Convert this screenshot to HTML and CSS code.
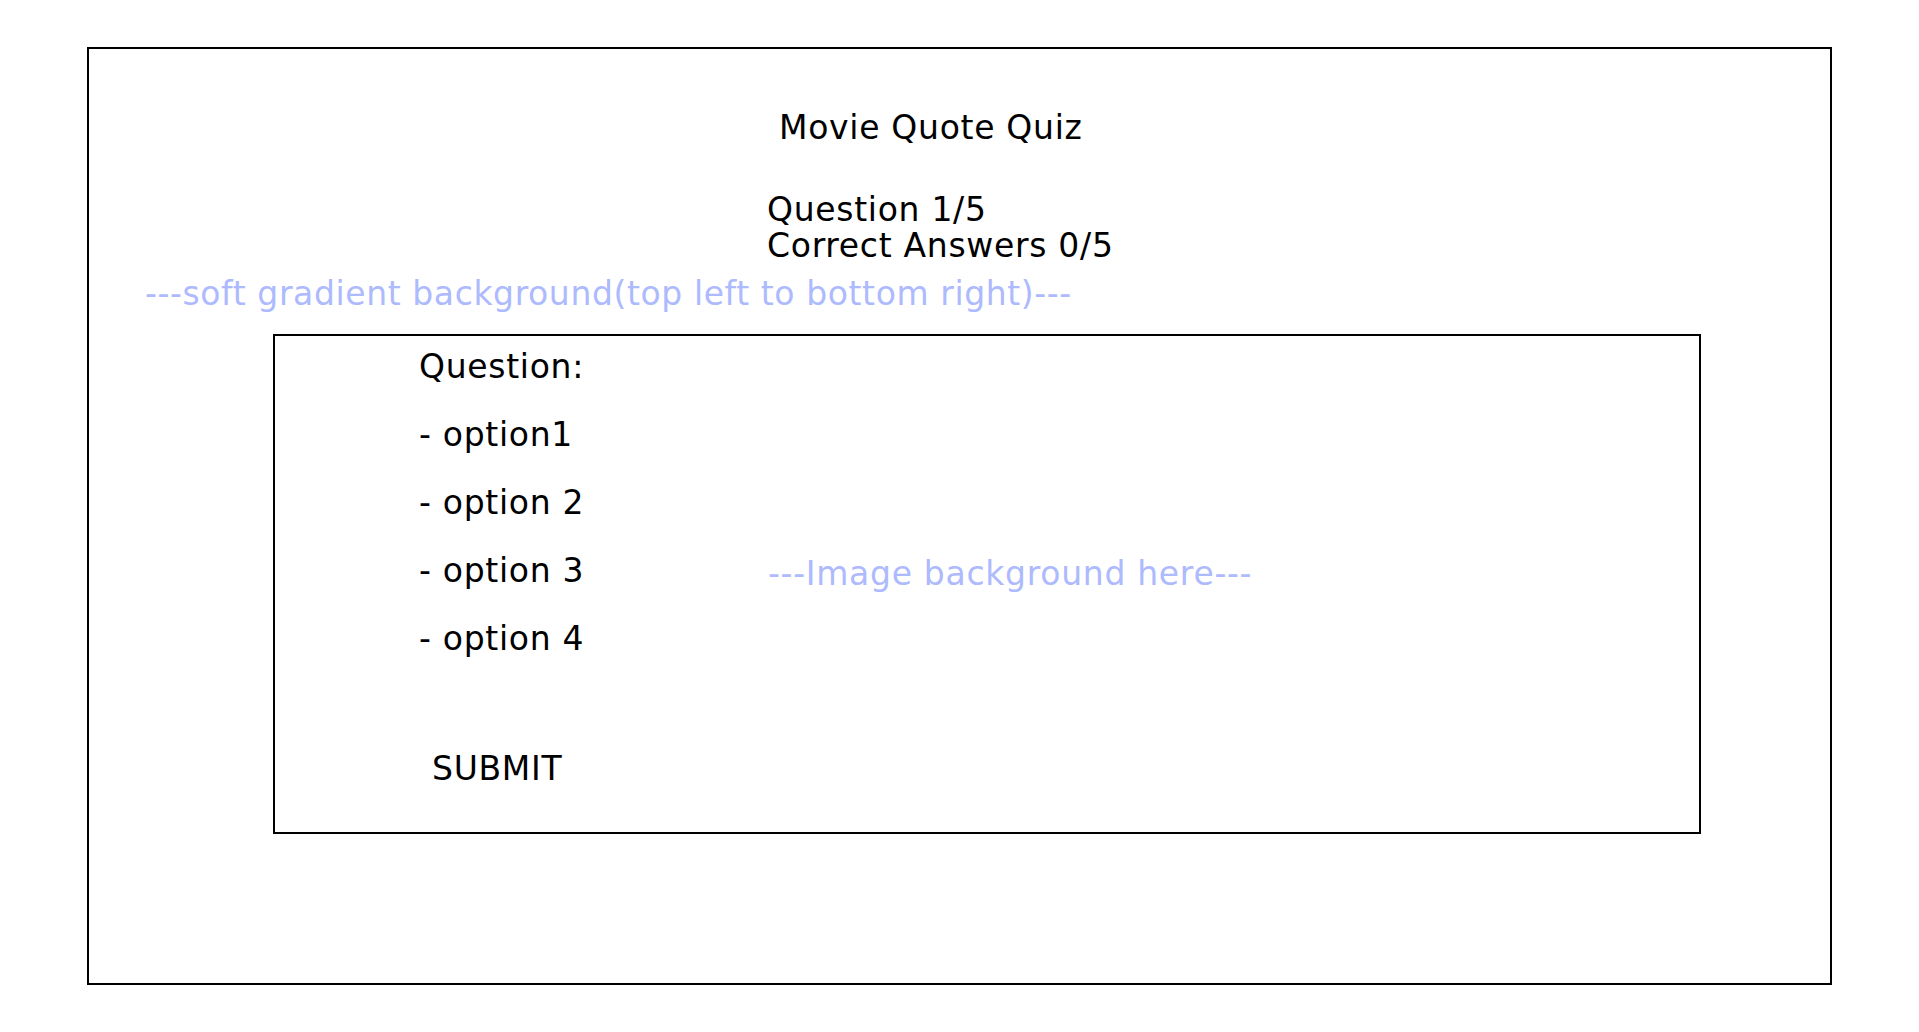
FILE: index.html
```html
<!DOCTYPE html>
<html lang="en">
<head>
<meta charset="utf-8">
<title>Movie Quote Quiz</title>
<link rel="stylesheet" href="styles.css">
</head>
<body>
  <div class="frame">
    <h1 class="title">Movie Quote Quiz</h1>
    <div class="stats">
      <div class="stat">Question 1/5</div>
      <div class="stat">Correct Answers 0/5</div>
    </div>
    <div class="note note-gradient">---soft gradient background(top left to bottom right)---</div>
    <div class="card">
      <div class="quiz">
        <div class="line">Question:</div>
        <ul class="options">
          <li class="line">- option1</li>
          <li class="line">- option 2</li>
          <li class="line">- option 3</li>
          <li class="line">- option 4</li>
        </ul>
        <div class="submit">SUBMIT</div>
      </div>
      <div class="note note-image">---Image background here---</div>
    </div>
  </div>
</body>
</html>
```

FILE: styles.css
```css
* { box-sizing: border-box; }

html, body {
  margin: 0;
  padding: 0;
  background: #ffffff;
}

body {
  font-family: "DejaVu Sans", "Verdana", sans-serif;
  font-size: 33px;
  line-height: 36px;
  letter-spacing: 0.7px;
  color: #000000;
  padding: 47px 0 0 87px;
}

.frame {
  width: 1745px;
  height: 938px;
  border: 2px solid #000000;
  padding-top: 61px;
}

.title {
  margin: 0;
  font-size: 33px;
  font-weight: normal;
  line-height: 36px;
  padding-left: 690px;
}

.stats {
  margin-top: 46px;
  padding-left: 678px;
  line-height: 36px;
}

.note {
  color: #adbafd;
}

.note-gradient {
  margin-top: 12px;
  padding-left: 56px;
  letter-spacing: 0.6px;
}

.card {
  margin: 22px 0 0 184px;
  width: 1428px;
  height: 500px;
  border: 2px solid #000000;
  display: flex;
  align-items: flex-start;
}

.quiz {
  padding: 13px 0 0 144px;
  width: 493px;
  display: flex;
  flex-direction: column;
}

.options {
  list-style: none;
  margin: 32px 0 0 0;
  padding: 0;
  display: flex;
  flex-direction: column;
  gap: 32px;
}

.submit {
  margin-top: 94px;
  padding-left: 13px;
}

.note-image {
  margin-top: 220px;
}
```
